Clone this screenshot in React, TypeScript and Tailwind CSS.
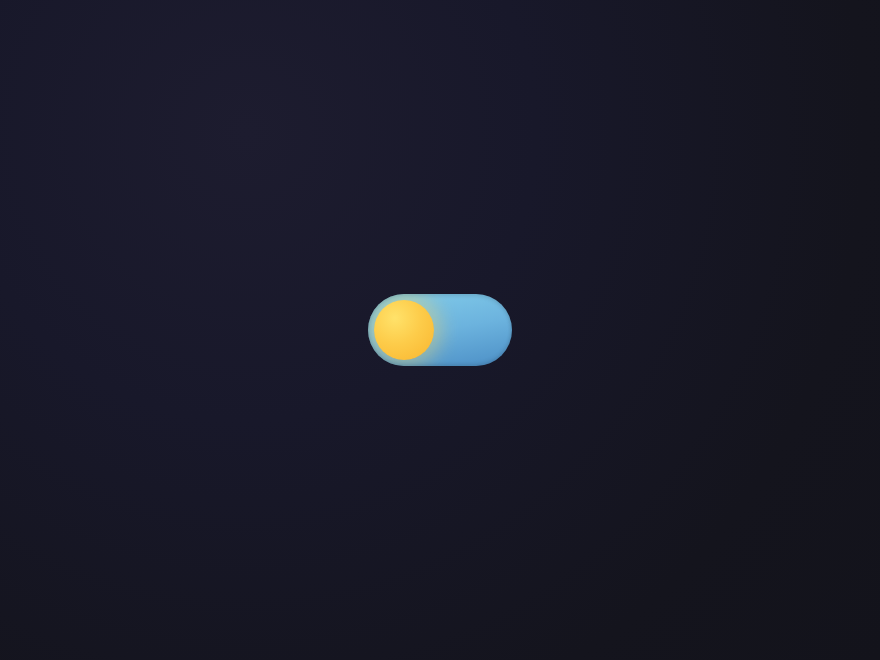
export default function App() {
  return (
    <div className="w-full h-screen flex items-center justify-center bg-[radial-gradient(circle_at_28%_20%,#1d1c2f_0%,#18182a_35%,#14141d_75%,#13131b_100%)]">
      {/* toggle, switched to the "day" side */}
      <button
        type="button"
        aria-label="Toggle theme"
        className="relative overflow-hidden w-[144px] h-[72px] rounded-full p-[6px] flex items-center bg-[linear-gradient(170deg,#82ccea_0%,#6cb3de_50%,#4c8fc6_100%)]"
      >
        <span className="block w-[60px] h-[60px] rounded-full bg-[radial-gradient(circle_at_35%_30%,#ffe26a_0%,#fdcc4a_45%,#f9b52e_100%)] shadow-[0_0_18px_8px_rgba(240,214,110,0.4)]" />
        <span className="pointer-events-none absolute inset-0 rounded-full shadow-[inset_0_2px_4px_rgba(0,0,0,0.12),inset_0_-2px_4px_rgba(0,0,0,0.12)]" />
      </button>
    </div>
  );
}
